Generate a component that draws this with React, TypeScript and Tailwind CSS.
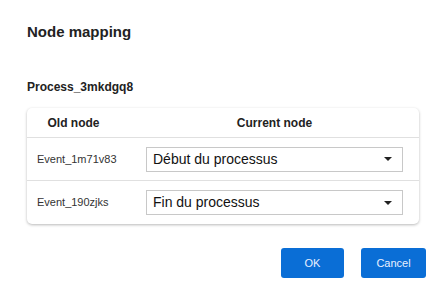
const rows = [
  { id: 'Event_1m71v83', current: 'Début du processus' },
  { id: 'Event_190zjks', current: 'Fin du processus' },
];

function Caret() {
  return (
    <svg className="h-[4px] w-[8px] shrink-0" viewBox="0 0 8 4" fill="#222">
      <path d="M0 0h8L4 4z" />
    </svg>
  );
}

export default function App() {
  return (
    <div className="w-[443px] h-[291px] bg-white font-['Liberation_Sans',Arial,sans-serif] text-[#222] px-[27px] pt-[22px]">
      <h1 className="text-[15px] font-bold leading-5 text-[#222]">Node mapping</h1>

      <h2 className="mt-[37px] text-[12px] font-bold leading-4 text-[#222]">Process_3mkdgq8</h2>

      <div className="mt-[13px] w-[392px] rounded-[5px] bg-white shadow-[0_1px_3px_rgba(0,0,0,0.28)]">
        <div className="grid grid-cols-[93px_1fr] h-[30px] items-center border-b border-[#e0e0e0] text-[12px] font-bold">
          <div className="text-center">Old node</div>
          <div className="pl-[26px] pr-[16px] text-center">Current node</div>
        </div>
        {rows.map((r, i) => (
          <div
            key={r.id}
            className={`grid grid-cols-[93px_1fr] h-[43px] items-center ${i === 0 ? 'border-b border-[#e0e0e0]' : ''}`}
          >
            <div className="pl-[10px] text-[11px] text-[#333]">{r.id}</div>
            <div className="pl-[26px] pr-[16px]">
              <div className="flex h-[25px] items-center justify-between border border-[#c8c8c8] bg-white pl-[6px] pr-[10px] text-[14px] text-[#111]">
                <span>{r.current}</span>
                <Caret />
              </div>
            </div>
          </div>
        ))}
      </div>

      <div className="mt-[24px] mr-[-10px] flex justify-end gap-[17px]">
        <button className="h-[30px] w-[63px] rounded-[3px] bg-[#0a6ed6] text-[11px] text-[#e8f0ff]">OK</button>
        <button className="h-[30px] w-[65px] rounded-[3px] bg-[#0a6ed6] text-[11px] text-[#e8f0ff]">Cancel</button>
      </div>
    </div>
  );
}
